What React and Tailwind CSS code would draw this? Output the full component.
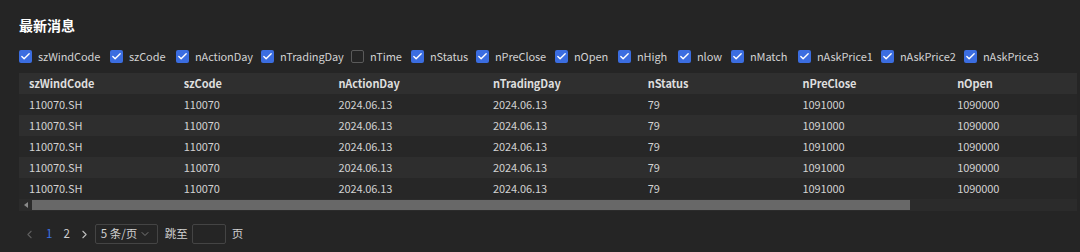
import { Check, ChevronDown, ChevronLeft, ChevronRight } from 'lucide-react';

// label widths taken so that each checkbox lands where the reference puts it
const FIELDS = [
  ['szWindCode', true, 'w-[59px]'],
  ['szCode', true, 'w-[34px]'],
  ['nActionDay', true, 'w-[53px]'],
  ['nTradingDay', true, 'w-[58px]'],
  ['nTime', false, 'w-[28px]'],
  ['nStatus', true, 'w-[33px]'],
  ['nPreClose', true, 'w-[47px]'],
  ['nOpen', true, 'w-[31px]'],
  ['nHigh', true, 'w-[28px]'],
  ['nlow', true, 'w-[21px]'],
  ['nMatch', true, 'w-[35px]'],
  ['nAskPrice1', true, 'w-[51px]'],
  ['nAskPrice2', true, 'w-[51px]'],
  ['nAskPrice3', true, 'w-[51px]'],
];

const COLUMNS = ['szWindCode', 'szCode', 'nActionDay', 'nTradingDay', 'nStatus', 'nPreClose', 'nOpen'];

const ROW = ['110070.SH', '110070', '2024.06.13', '2024.06.13', '79', '1091000', '1090000'];

const ROWS = [ROW, ROW, ROW, ROW, ROW];

function Checkbox({ checked }) {
  return checked ? (
    <span className="w-[13px] h-[13px] shrink-0 rounded-[2px] bg-[#3b6de0] flex items-center justify-center text-white">
      <Check size={11} strokeWidth={3} />
    </span>
  ) : (
    <span className="w-[13px] h-[13px] shrink-0 rounded-[2px] border border-[#5a5a5a] bg-transparent" />
  );
}

export default function App() {
  return (
    <div
      className="w-[1080px] h-[252px] bg-[#252525] pl-[19px] pr-[3px] overflow-hidden text-[#d2d2d2]"
      style={{ fontFamily: '"Noto Sans CJK SC", "Noto Sans", sans-serif' }}
    >
      <h2 className="pt-[14px] text-[14px] leading-[22px] font-bold text-white">最新消息</h2>

      <div className="mt-[10px] h-[20px] flex items-center gap-[13px] text-[11px] tracking-[-0.1px] whitespace-nowrap">
        {FIELDS.map(([name, checked, w]) => (
          <label key={name} className="flex items-center gap-[6px]">
            <Checkbox checked={checked} />
            <span className={`${w} shrink-0`}>{name}</span>
          </label>
        ))}
      </div>

      <div className="mt-[7px] w-full overflow-hidden text-[11px] tracking-[-0.1px]">
        <div className="w-[1085px]">
          <div className="flex h-[21px] items-center bg-[#2f2f2f] font-bold text-[#dedede]">
            {COLUMNS.map((col) => (
              <div key={col} className="w-[154.7px] shrink-0 pl-[10px]">{col}</div>
            ))}
          </div>
          {ROWS.map((row, i) => (
            <div
              key={i}
              className={`flex h-[21px] items-center ${i % 2 === 1 ? 'bg-[#2e2e2e]' : 'bg-[#272727]'}`}
            >
              {row.map((cell, j) => (
                <div key={j} className="w-[154.7px] shrink-0 pl-[10px]">{cell}</div>
              ))}
            </div>
          ))}
        </div>
        {/* horizontal scrollbar */}
        <div className="h-[12px] bg-[#2b2b2b] flex items-center">
          <span className="w-[13px] flex justify-center">
            <span className="w-0 h-0 border-y-[3px] border-y-transparent border-r-[4px] border-r-[#8a8a8a]" />
          </span>
          <span className="w-[878px] h-[10px] bg-[#686868]" />
        </div>
      </div>

      <div className="mt-[13px] h-[20px] flex items-center text-[11.5px] whitespace-nowrap">
        <ChevronLeft size={13} className="text-[#5e5e5e] ml-[4px]" />
        <span className="ml-[10px] text-[#3b72e6]">1</span>
        <span className="ml-[11px] text-[#cfcfcf]">2</span>
        <ChevronRight size={13} className="ml-[8px] text-[#bdbdbd]" />
        <div className="ml-[4px] w-[63px] h-[20px] border border-[#444] rounded-[2px] flex items-center justify-between pl-[5px] pr-[6px]">
          <span>5 条/页</span>
          <ChevronDown size={12} className="text-[#777]" />
        </div>
        <span className="ml-[7px]">跳至</span>
        <div className="ml-[4px] w-[34px] h-[20px] border border-[#444] rounded-[2px]" />
        <span className="ml-[6px]">页</span>
      </div>
    </div>
  );
}
